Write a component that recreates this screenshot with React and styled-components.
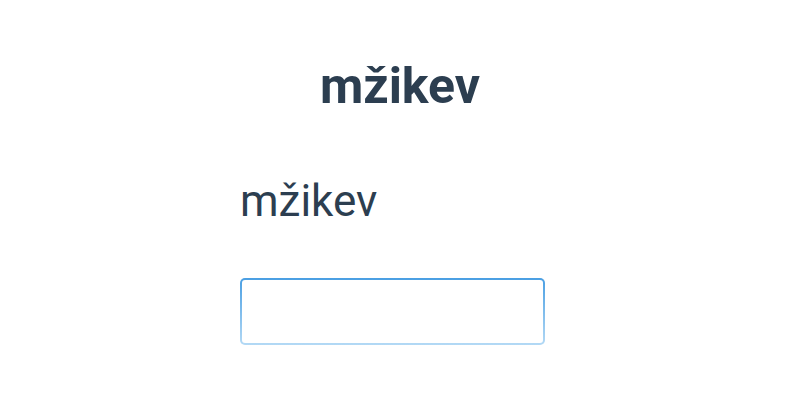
import React from 'react';
import styled, { createGlobalStyle } from 'styled-components';

const Global = createGlobalStyle`
  body {
    margin: 0;
    background: #ffffff;
    font-family: Roboto, "Noto Sans", sans-serif;
    color: #2c3e50;
  }
`

const Page = styled.div`
  width: 800px;
  height: 400px;
  display: flex;
  flex-direction: column;
  align-items: center;
  padding-top: 56px;
  box-sizing: border-box;
`

const Title = styled.h1`
  margin: 0;
  font-size: 50px;
  font-weight: 700;
  line-height: 60px;
`

const Form = styled.div`
  width: 320px;
  margin-top: 59px;
  display: flex;
  flex-direction: column;
  align-items: flex-start;
`

const Label = styled.label`
  font-size: 44px;
  line-height: 52px;
`

const Input = styled.input`
  margin-top: 51px;
  width: 305px;
  height: 67px;
  box-sizing: border-box;
  border: 2px solid transparent;
  border-radius: 5px;
  background:
    linear-gradient(#fff, #fff) padding-box,
    linear-gradient(#4a9fe3, #b3d9f5) border-box;
  outline: none;
  font: inherit;
  font-size: 32px;
  padding: 0 12px;
`

const App = () => {
    return (
        <Page>
            <Global />
            <Title>mžikev</Title>
            <Form>
                <Label htmlFor="field">mžikev</Label>
                <Input id="field" type="text" />
            </Form>
        </Page>
    );
};

export default App;
